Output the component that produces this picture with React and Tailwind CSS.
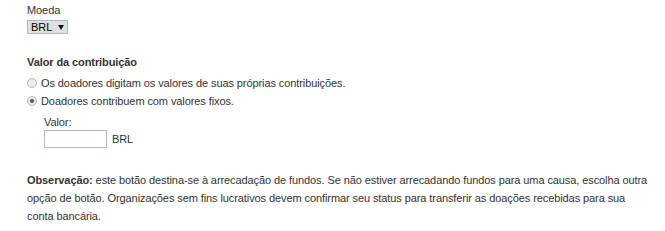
export default function App() {
  return (
    <div className="w-[665px] h-[231px] bg-white text-[#333333] pl-[27px] pt-[3px] text-[11px] leading-[14px] tracking-[-0.09px]" style={{ fontFamily: '"Liberation Sans", Arial, sans-serif' }}>
      <div>Moeda</div>
      <div className="mt-[3px] flex">
        <div className="w-[41px] h-[14px] border border-[#a7bbd3] bg-[#dfe0e2] flex items-center justify-between pl-[3px] pr-[3px] text-[11px] text-black tracking-normal">
          <span>BRL</span>
          <svg width="6" height="5" viewBox="0 0 6 5"><path d="M0 0 H6 L3 5 Z" fill="#111" /></svg>
        </div>
      </div>
      <div className="mt-[21px] font-bold">Valor da contribuição</div>
      <div className="mt-[7px] flex items-center h-[14px]">
        <span className="w-[10px] h-[10px] rounded-full border border-[#b5b5b5] bg-[#ececec] mr-[4px]" />
        <span>Os doadores digitam os valores de suas próprias contribuições.</span>
      </div>
      <div className="mt-[4px] flex items-center h-[14px]">
        <span className="w-[10px] h-[10px] rounded-full border border-[#b5b5b5] bg-[#ececec] mr-[4px] flex items-center justify-center">
          <span className="w-[4px] h-[4px] rounded-full bg-[#555]" />
        </span>
        <span>Doadores contribuem com valores fixos.</span>
      </div>
      <div className="ml-[17px] mt-[7px]">Valor:</div>
      <div className="ml-[17px] mt-[1px] flex items-center">
        <div className="w-[63px] h-[18px] border border-[#a7bbd3] bg-white" />
        <span className="ml-[5px]">BRL</span>
      </div>
      <div className="mt-[23px] w-[625px] leading-[18px]">
        <b>Observação:</b> este botão destina-se à arrecadação de fundos. Se não estiver arrecadando fundos para uma causa, escolha outra opção de botão. Organizações sem fins lucrativos devem confirmar seu status para transferir as doações recebidas para sua conta bancária.
      </div>
    </div>
  );
}
